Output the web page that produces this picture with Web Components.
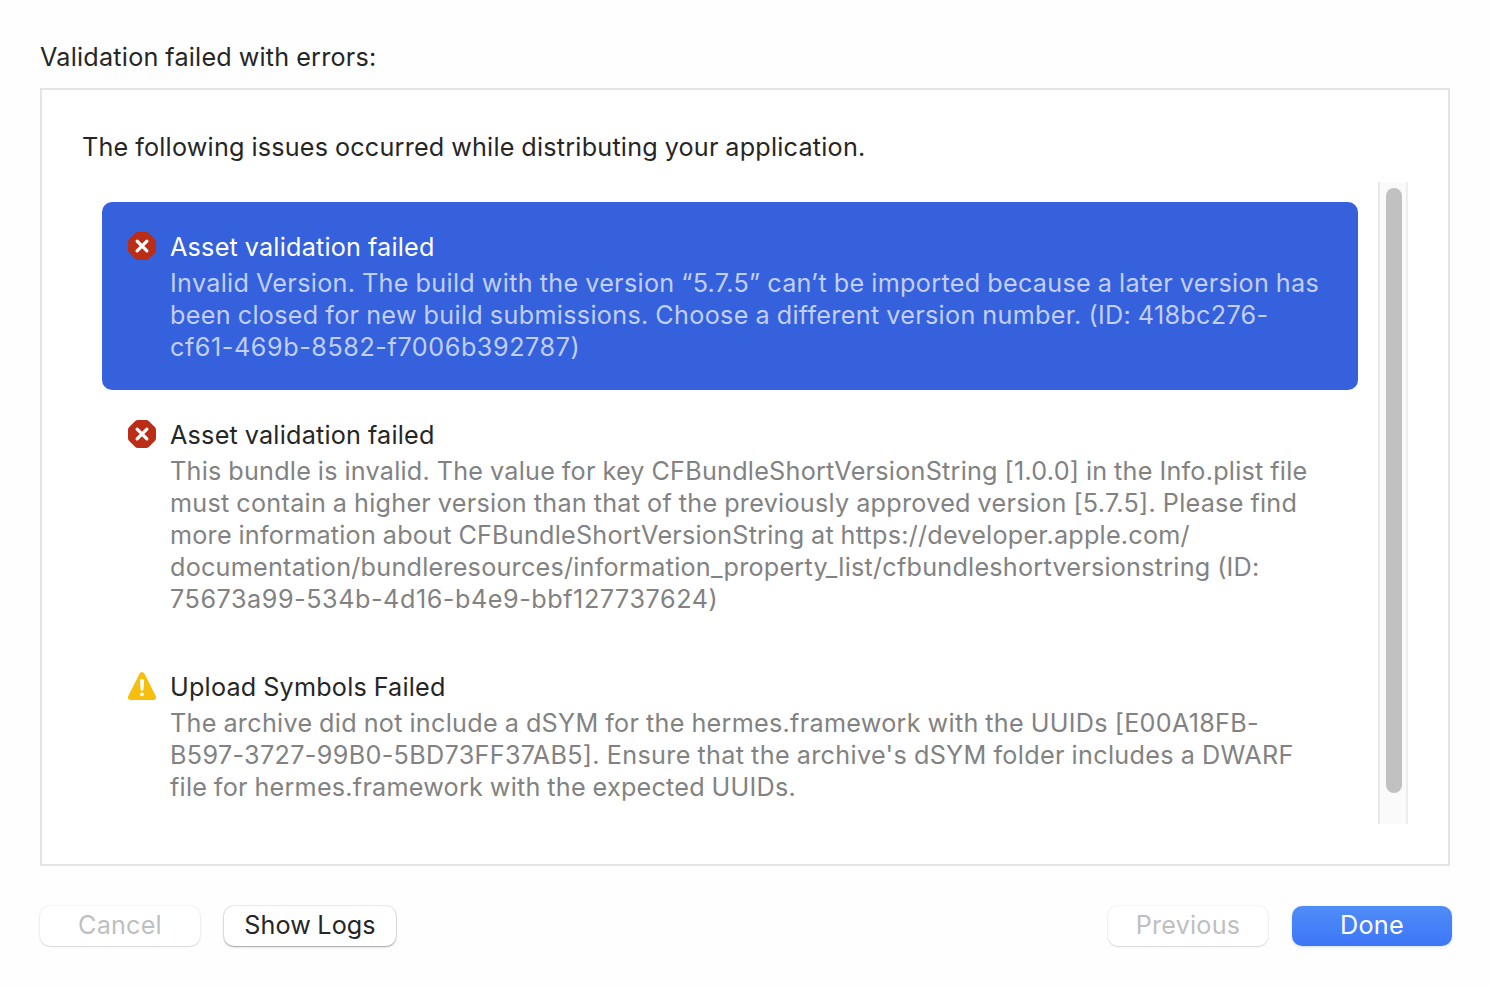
<!DOCTYPE html>
<html lang="en">
<head>
<meta charset="utf-8">
<title>Validation failed</title>
<style>
  html, body { margin: 0; height: 100%; background: #fefefe; overflow: hidden; }
  body { font-family: Inter, "Liberation Sans", sans-serif; font-size: 25.2px; font-weight: 430; color: #262626; }
</style>
</head>
<body>
<validation-dialog>
  <text-line slot="title" extent="335">Validation failed with errors:</text-line>
  <text-line slot="intro" extent="782">The following issues occurred while distributing your application.</text-line>
  <issue-row kind="error" selected>
    <text-line slot="heading" extent="263">Asset validation failed</text-line>
    <text-line extent="1148.5">Invalid Version. The build with the version “5.7.5” can’t be imported because a later version has</text-line>
    <text-line extent="1096.5">been closed for new build submissions. Choose a different version number. (ID: 418bc276-</text-line>
    <text-line extent="407.5">cf61-469b-8582-f7006b392787)</text-line>
  </issue-row>
  <issue-row kind="error">
    <text-line slot="heading" extent="263">Asset validation failed</text-line>
    <text-line extent="1136.5">This bundle is invalid. The value for key CFBundleShortVersionString [1.0.0] in the Info.plist file</text-line>
    <text-line extent="1125.5">must contain a higher version than that of the previously approved version [5.7.5]. Please find</text-line>
    <text-line extent="1019.5">more information about CFBundleShortVersionString at https://developer.apple.com/</text-line>
    <text-line extent="1088">documentation/bundleresources/information_property_list/cfbundleshortversionstring (ID:</text-line>
    <text-line extent="545.5">75673a99-534b-4d16-b4e9-bbf127737624)</text-line>
  </issue-row>
  <issue-row kind="warning">
    <text-line slot="heading" extent="274">Upload Symbols Failed</text-line>
    <text-line extent="1087">The archive did not include a dSYM for the hermes.framework with the UUIDs [E00A18FB-</text-line>
    <text-line extent="1122.5">B597-3727-99B0-5BD73FF37AB5]. Ensure that the archive's dSYM folder includes a DWARF</text-line>
    <text-line extent="624.5">file for hermes.framework with the expected UUIDs.</text-line>
  </issue-row>
  <push-button slot="left" disabled style="width:160px"><text-line extent="82.5">Cancel</text-line></push-button>
  <push-button slot="left" style="width:172px"><text-line extent="131">Show Logs</text-line></push-button>
  <push-button slot="right" disabled style="width:160px"><text-line extent="104">Previous</text-line></push-button>
  <push-button slot="right" primary style="width:160px"><text-line extent="63">Done</text-line></push-button>
</validation-dialog>

<script>
const shadow = (el, html) => { el.attachShadow({ mode: 'open' }).innerHTML = html; };

/* One unwrapped line of text, tracked so that its glyphs span `extent` pixels.
   Word gaps are set a little tighter than the font's own. */
const WORD_GAP = -0.6;
customElements.define('text-line', class extends HTMLElement {
  constructor() {
    super();
    shadow(this, `<style>:host{display:block;white-space:nowrap;word-spacing:${WORD_GAP}px}</style><slot></slot>`);
  }
  connectedCallback() {
    const text = this.textContent;
    const ctx = document.createElement('canvas').getContext('2d');
    ctx.font = '430 25.2px Inter, "Liberation Sans", sans-serif';
    const spaces = text.split(' ').length - 1;
    const ink = ctx.measureText(text).actualBoundingBoxRight + spaces * WORD_GAP;
    this.style.letterSpacing = ((+this.getAttribute('extent') - ink) / (text.length - 1)).toFixed(4) + 'px';
  }
});

const icons = {
  error: `<svg viewBox="0 0 28 28"><path fill="#ba2d17" d="M10 0h8q1.800 0 3 1.200L26.800 7q1.200 1.200 1.200 3v8q0 1.800-1.200 3L21 26.800q-1.200 1.200-3 1.200h-8q-1.800 0-3-1.200L1.200 21Q0 19.800 0 18v-8q0-1.800 1.200-3L7 1.200Q8.200 0 10 0z"/><path d="M9.100 9.100l9.800 9.800M18.900 9.100l-9.800 9.800" stroke="#fff" stroke-width="3.200" stroke-linecap="round"/></svg>`,
  warning: `<svg viewBox="0 0 28 28"><path fill="#f6bf10" d="M11.600 1.500Q12.500 0 14 0t2.400 1.500L27.500 23.500Q28.600 25.600 27.700 26.900T25.200 28H2.800Q1.200 28 .3 26.900T.5 23.500z"/><path fill="#fff" d="M14 7q2.200 0 2.100 2.100l-.6 8.200q-.1 1.500-1.500 1.500t-1.500-1.500l-.6-8.200Q11.800 7 14 7z"/><circle cx="14" cy="22.300" r="1.900" fill="#fff"/></svg>`
};

customElements.define('issue-row', class extends HTMLElement {
  constructor() {
    super();
    shadow(this, `<style>
      :host{display:flex;gap:14px;box-sizing:border-box;padding:27px 26px;border-radius:10px;color:#828282}
      :host([selected]){background:#3561dc;color:#c2cff4}
      .icon{width:28px;height:28px;flex:none;margin-top:3px}
      svg{display:block;width:28px;height:28px}
      .text{flex:1;min-width:0;line-height:32px}
      .heading{line-height:36px;color:#262626;margin-bottom:2px}
      :host([selected]) .heading{color:#fff}
    </style><div class="icon">${icons[this.getAttribute('kind')]}</div>
    <div class="text"><div class="heading"><slot name="heading"></slot></div><slot></slot></div>`);
  }
});

customElements.define('scroll-track', class extends HTMLElement {
  constructor() {
    super();
    shadow(this, `<style>
      :host{display:flex;flex-direction:column;align-items:center;box-sizing:border-box;width:30px;padding-top:6px;
        background:#fafafa;border:solid #e8e8e8;border-width:0 2px;border-right-color:#ededed}
      i{display:block;width:16px;height:605px;border-radius:8px;background:#c1c1c1;margin-left:2px}
    </style><i></i>`);
  }
});

customElements.define('push-button', class extends HTMLElement {
  constructor() {
    super();
    shadow(this, `<style>
      :host{display:flex;justify-content:center;height:40px;line-height:38px;border-radius:10px;background:#fff;
        box-shadow:0 0 0 1px rgba(0,0,0,.08),0 1px 1.500px rgba(0,0,0,.24),0 2px 3px rgba(0,0,0,.06)}
      :host([disabled]){color:#bfbfbf;box-shadow:0 0 0 1px rgba(0,0,0,.035),0 1px 1.500px rgba(0,0,0,.12)}
      :host([primary]){color:#fff;background:linear-gradient(#4f8df8,#3d76f7);box-shadow:0 1px 3px rgba(61,118,247,.22)}
    </style><slot></slot>`);
  }
});

customElements.define('validation-dialog', class extends HTMLElement {
  constructor() {
    super();
    shadow(this, `<style>
      :host{display:flex;flex-direction:column;box-sizing:border-box;width:1490px;height:986px;padding:41px 38px 0 40px}
      .title{line-height:32px;height:47px}
      .panel{box-sizing:border-box;width:1410px;height:778px;border:2px solid #e4e4e4;background:#fff;padding:41px 40px 40px;display:flex;flex-direction:column}
      .intro{line-height:32px;height:51px;flex:none}
      .view{display:flex;height:642px;justify-content:space-between;overflow:hidden}
      .list{width:1256px;padding:20px 0 0 20px;flex:none}
      .bar{display:flex;justify-content:space-between;margin-top:40px}
      .group{display:flex;gap:24px}
    </style>
    <div class="title"><slot name="title"></slot></div>
    <div class="panel">
      <div class="intro"><slot name="intro"></slot></div>
      <div class="view"><div class="list"><slot></slot></div><scroll-track></scroll-track></div>
    </div>
    <div class="bar"><div class="group"><slot name="left"></slot></div><div class="group"><slot name="right"></slot></div></div>`);
  }
});
</script>
</body>
</html>
